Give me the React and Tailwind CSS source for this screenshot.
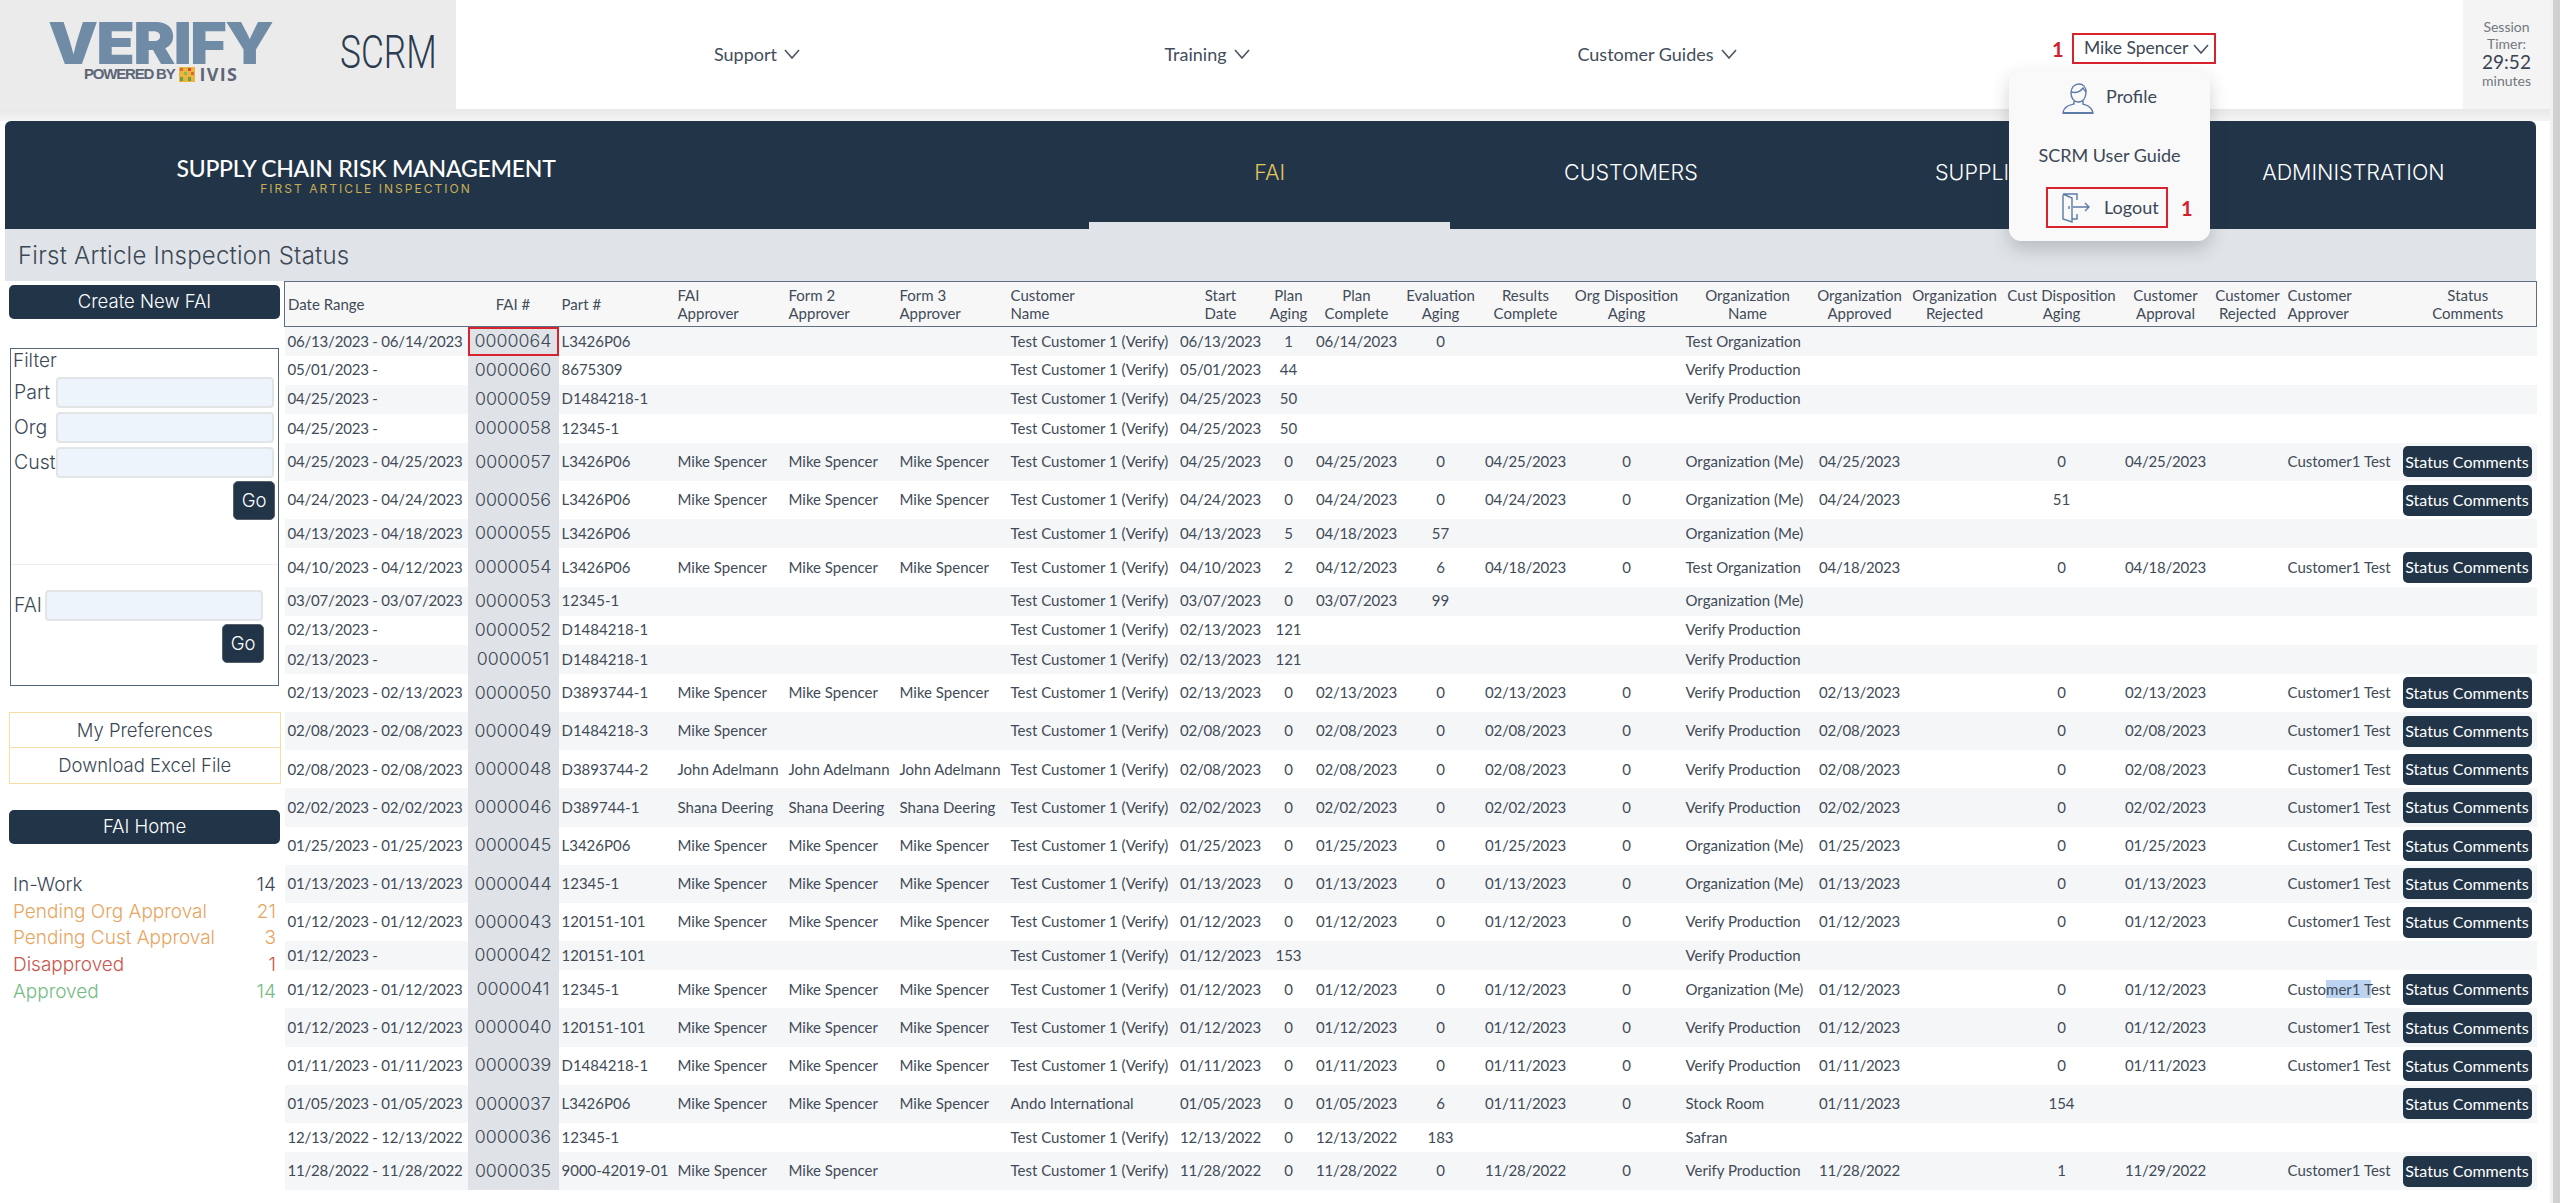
import React from 'react';

const MS = 'Mike Spencer';
const JA = 'John Adelmann';
const SD = 'Shana Deering';
const TC = 'Test Customer 1 (Verify)';
const VP = 'Verify Production';
const OM = 'Organization (Me)';
const TO = 'Test Organization';
const C1 = 'Customer1 Test';

// Rows with a full approval history all repeat the same date, so build them from one value
const full = (date, fai, part, org, approvers = [MS, MS, MS], marked = false) => ({
  range: `${date} - ${date}`, fai, part, approvers, customer: TC, start: date, aging: '0', complete: date,
  evalAging: '0', results: date, orgAging: '0', org, orgApproved: date, custAging: '0', custApproval: date,
  approver: C1, button: true, marked,
});

const open = (date, fai, part, aging, org, extra = {}) => ({
  range: `${date} -`, fai, part, approvers: ['', '', ''], customer: TC, start: date, aging, org, ...extra,
});

const ROWS = [
  { ...open('06/13/2023', '0000064', 'L3426P06', '1', TO), range: '06/13/2023 - 06/14/2023', complete: '06/14/2023', evalAging: '0', boxed: true },
  open('05/01/2023', '0000060', '8675309', '44', VP),
  open('04/25/2023', '0000059', 'D1484218-1', '50', VP),
  open('04/25/2023', '0000058', '12345-1', '50', ''),
  full('04/25/2023', '0000057', 'L3426P06', OM),
  { ...full('04/24/2023', '0000056', 'L3426P06', OM), custAging: '51', custApproval: '', approver: '' },
  { ...open('04/13/2023', '0000055', 'L3426P06', '5', OM), range: '04/13/2023 - 04/18/2023', complete: '04/18/2023', evalAging: '57' },
  { ...full('04/10/2023', '0000054', 'L3426P06', TO), range: '04/10/2023 - 04/12/2023', aging: '2', complete: '04/12/2023', evalAging: '6', results: '04/18/2023', orgApproved: '04/18/2023', custApproval: '04/18/2023' },
  { ...open('03/07/2023', '0000053', '12345-1', '0', OM), range: '03/07/2023 - 03/07/2023', complete: '03/07/2023', evalAging: '99' },
  open('02/13/2023', '0000052', 'D1484218-1', '121', VP),
  open('02/13/2023', '0000051', 'D1484218-1', '121', VP),
  full('02/13/2023', '0000050', 'D3893744-1', VP),
  full('02/08/2023', '0000049', 'D1484218-3', VP, [MS, '', '']),
  full('02/08/2023', '0000048', 'D3893744-2', VP, [JA, JA, JA]),
  full('02/02/2023', '0000046', 'D389744-1', VP, [SD, SD, SD]),
  full('01/25/2023', '0000045', 'L3426P06', OM),
  full('01/13/2023', '0000044', '12345-1', OM),
  full('01/12/2023', '0000043', '120151-101', VP),
  open('01/12/2023', '0000042', '120151-101', '153', VP),
  full('01/12/2023', '0000041', '12345-1', OM, [MS, MS, MS], true),
  full('01/12/2023', '0000040', '120151-101', VP),
  full('01/11/2023', '0000039', 'D1484218-1', VP),
  { ...full('01/05/2023', '0000037', 'L3426P06', 'Stock Room'), customer: 'Ando International', evalAging: '6', results: '01/11/2023', orgApproved: '01/11/2023', custAging: '154', custApproval: '', approver: '' },
  { ...open('12/13/2022', '0000036', '12345-1', '0', 'Safran'), range: '12/13/2022 - 12/13/2022', complete: '12/13/2022', evalAging: '183' },
  { ...full('11/28/2022', '0000035', '9000-42019-01', VP, [MS, MS, '']), custAging: '1', custApproval: '11/29/2022' },
];

const COLS = ['w-[183px]', 'w-[91px]', 'w-[116px]', 'w-[111px]', 'w-[111px]', 'w-[111px]', 'w-[167px]', 'w-[92px]', 'w-[44px]', 'w-[92px]', 'w-[76px]', 'w-[94px]', 'w-[108px]', 'w-[134px]', 'w-[90px]', 'w-[100px]', 'w-[114px]', 'w-[94px]', 'w-[70px]', 'w-[117px]', 'w-[137px]'];

// label lines, alignment
const HEADERS = [
  [['Date Range'], 'l'], [['FAI #'], 'c'], [['Part #'], 'l'], [['FAI', 'Approver'], 'l'], [['Form 2', 'Approver'], 'l'], [['Form 3', 'Approver'], 'l'],
  [['Customer', 'Name'], 'l'], [['Start', 'Date'], 'c'], [['Plan', 'Aging'], 'c'], [['Plan', 'Complete'], 'c'], [['Evaluation', 'Aging'], 'c'], [['Results', 'Complete'], 'c'],
  [['Org Disposition', 'Aging'], 'c'], [['Organization', 'Name'], 'c'], [['Organization', 'Approved'], 'c'], [['Organization', 'Rejected'], 'c'], [['Cust Disposition', 'Aging'], 'c'],
  [['Customer', 'Approval'], 'c'], [['Customer', 'Rejected'], 'c'], [['Customer', 'Approver'], 'l'], [['Status', 'Comments'], 'c'],
];

const STATUS = [
  ['In-Work', '14', 'text-[#3c4855]'],
  ['Pending Org Approval', '21', 'text-[#e6a561]'],
  ['Pending Cust Approval', '3', 'text-[#e6a561]'],
  ['Disapproved', '1', 'text-[#c9564e]'],
  ['Approved', '14', 'text-[#74bb84]'],
];

function Chevron() {
  return (
    <svg width="16" height="10" viewBox="0 0 16 10" fill="none" stroke="#4a5563" strokeWidth="1.6">
      <path d="M1 1l7 8 7-8" />
    </svg>
  );
}

function NavLink({ label }) {
  return (
    <div className="w-[450px] flex justify-center items-center gap-[7px] text-[18px] text-[#434d5a]">
      {label} <Chevron />
    </div>
  );
}

function Logo() {
  return (
    <div className="w-[340px] shrink-0 pl-[48px] pt-[22px] flex flex-col">
      <span className="h-[42px] w-[204px] leading-[42px] text-[58px] font-black font-['Inter'] text-[#6f8ba6] tracking-[-0.03em] whitespace-nowrap scale-x-[1.09] origin-left">VERIFY</span>
      <div className="flex items-center ml-[36px] mt-[3px] h-[14px]">
        <span className="text-[15px] leading-[14px] font-bold font-['Liberation_Sans'] tracking-[-0.08em] text-[#5d6678] whitespace-nowrap">POWERED BY</span>
        <svg className="ml-[4px]" width="16" height="15" viewBox="0 0 16 15">
          <rect width="16" height="15" fill="#e9b43f" />
          <rect x="1" y="1" width="3" height="3" fill="#e0662f" />
          <rect x="9" y="1" width="3" height="3" fill="#d9482f" />
          <rect x="5" y="5" width="3" height="3" fill="#8fb84a" />
          <rect x="12" y="5" width="3" height="3" fill="#e0662f" />
          <rect x="1" y="10" width="3" height="4" fill="#6f9e3f" />
          <rect x="9" y="10" width="3" height="4" fill="#6f9e3f" />
        </svg>
        <span className="ml-[5px] text-[18px] leading-[14px] font-bold font-['Open_Sans'] tracking-[0.07em] text-[#5d6678]">IVIS</span>
      </div>
    </div>
  );
}

function Header() {
  return (
    <header className="h-[109px] flex bg-white">
      <div className="w-[456px] bg-[#ebebec] flex">
        <Logo />
        <span className="mt-[28px] h-[48px] text-[47px] leading-[48px] font-['Roboto'] font-light text-[#2b3c50] scale-x-[0.75] origin-left">SCRM</span>
      </div>
      <div className="flex-1 flex pl-[76px] items-start pt-[33px]">
        <div className="flex h-[42px]">
          <NavLink label="Support" />
          <NavLink label="Training" />
          <NavLink label="Customer Guides" />
        </div>
        <span className="ml-[170px] w-[20px] mt-[1px] text-[20px] leading-[31px] font-bold text-[#d4202c]">1</span>
        <div className="w-[144px] h-[31px] border-2 border-[#d8232e] flex items-center justify-between pl-[10px] pr-[5px] text-[17.5px] text-[#3c4855] whitespace-nowrap">
          Mike Spencer <Chevron />
        </div>
      </div>
      <div className="w-[87px] bg-[#f4f4f5] flex flex-col items-center pt-[18px] text-[14px] leading-[17px] text-[#727880]">
        <span>Session</span>
        <span>Timer:</span>
        <span className="text-[19px] leading-[20px] text-[#3a4450]">29:52</span>
        <span>minutes</span>
      </div>
    </header>
  );
}

function Tab({ label, active }) {
  return (
    <div className={`relative w-[361.25px] flex items-center justify-center pb-[5px] text-[21.5px] font-light font-['Inter'] ${active ? 'text-[#e3c45f]' : 'text-white'}`}>
      {label}
      {active && <span className="absolute left-0 right-0 bottom-0 h-[7px] bg-[#e0e4e8]" />}
    </div>
  );
}

function NavBar() {
  return (
    <nav className="h-[108px] bg-[#223548] rounded-t-[6px] flex">
      <div className="w-[1084.5px] flex">
        <div className="w-[723px] flex flex-col items-center pt-[35px]">
          <span className="text-[23px] leading-[24px] font-['Lato'] font-medium text-white whitespace-nowrap tracking-[-0.01em]">SUPPLY CHAIN RISK MANAGEMENT</span>
          <span className="mt-[1px] text-[12px] leading-[16px] font-['Inter'] tracking-[0.17em] text-[#c9ae55] whitespace-nowrap">FIRST ARTICLE INSPECTION</span>
        </div>
      </div>
      <Tab label="FAI" active />
      <Tab label="CUSTOMERS" />
      <Tab label="SUPPLIERS" />
      <Tab label="ADMINISTRATION" />
    </nav>
  );
}

function DarkBar({ label }) {
  return (
    <div className="h-[34px] rounded-[5px] bg-[#223548] text-white flex items-center justify-center text-[18.5px] font-['Inter'] font-light">
      {label}
    </div>
  );
}

function GoButton() {
  return (
    <button className="w-[42px] h-[39px] rounded-[5px] border border-[#55606b] bg-[#223548] text-white text-[18.5px] font-['Inter'] font-light">Go</button>
  );
}

function FilterInput({ label, width }) {
  return (
    <div className="flex items-center justify-between text-[19.5px] font-['Inter'] font-light text-[#3c4855]">
      <span className="pl-[3px]">{label}</span>
      <div className={`${width} h-[31px] rounded-[4px] border-2 border-[#e3e4e6] bg-[#eef4fb]`} />
    </div>
  );
}

function Sidebar() {
  return (
    <aside className="w-[279.5px] shrink-0 pl-[4.5px] pr-[4px] pt-[4px] font-['Inter'] text-[#3c4855]">
      <DarkBar label="Create New FAI" />
      <div className="mt-[29px] ml-[1px] w-[269px] h-[338px] border border-[#55677a] pt-[1px] flex flex-col">
        <span className="h-[22px] pl-[2px] text-[19px] font-light leading-[22px]">Filter</span>
        <div className="mt-[5px] pr-[4px] flex flex-col gap-[4px]">
          <FilterInput label="Part" width="w-[218px]" />
          <FilterInput label="Org" width="w-[218px]" />
          <FilterInput label="Cust" width="w-[218px]" />
        </div>
        <div className="mt-[3px] pr-[3px] flex justify-end"><GoButton /></div>
        <div className="mt-[44px] h-px bg-[#eceef0]" />
        <div className="mt-[25px] pr-[15px]">
          <FilterInput label="FAI" width="w-[218px]" />
        </div>
        <div className="mt-[3px] pr-[14px] flex justify-end"><GoButton /></div>
      </div>
      <div className="mt-[26px] -ml-[0.5px] w-[272.5px] border border-[#f4dea3] text-[18.5px] font-light text-center">
        <div className="h-[35px] leading-[34px] border-b border-[#f4dea3]">My Preferences</div>
        <div className="h-[35px] leading-[35px]">Download Excel File</div>
      </div>
      <div className="mt-[26px]"><DarkBar label="FAI Home" /></div>
      <div className="mt-[28px] pl-[4px] pr-[4px] text-[19px] font-light leading-[26.7px]">
        {STATUS.map(([label, count, color]) => (
          <div key={label} className={`flex justify-between ${color}`}>
            <span>{label}</span>
            <span>{count}</span>
          </div>
        ))}
      </div>
    </aside>
  );
}

function Cell({ children, left, pad = 'pl-[3px]', className = '' }) {
  return <td className={`p-0 pb-[1px] whitespace-nowrap overflow-visible ${left ? `text-left ${pad}` : 'text-center'} ${className}`}>{children}</td>;
}

function FaiTable() {
  const tight = 'tracking-[-0.2px]';
  return (
    <table className="table-fixed w-[2252px] h-fit font-['Lato'] text-[15px] text-[#414b57]">
      <colgroup>
        {COLS.map((width, i) => <col key={i} className={width} />)}
      </colgroup>
      <thead>
        <tr className="h-[45px] border border-[#5d6f80] bg-[#f7f7f8]">
          {HEADERS.map(([lines, align], i) => (
            <th key={lines.join()} className={`p-0 font-normal leading-[18px] whitespace-nowrap ${align === 'l' ? (i === 19 ? 'text-left pl-[5px]' : 'text-left pl-[3px]') : 'text-center'}`}>
              {lines.map((line) => <div key={line}>{line}</div>)}
            </th>
          ))}
        </tr>
      </thead>
      <tbody>
        {ROWS.map((r, i) => (
          <tr key={r.fai} className={`${r.button ? 'h-[38.2px]' : 'h-[29.1px]'} ${i % 2 === 0 ? 'bg-[#f5f6f7]' : 'bg-white'}`}>
            <Cell left className={tight}>{r.range}</Cell>
            <td className={`p-0 text-center font-['Inter'] font-light text-[17.8px] text-[#3c4855] bg-[#dfe2e6] ${r.boxed ? 'outline-2 -outline-offset-2 outline-[#d8232e]' : ''}`}>{r.fai}</td>
            <Cell left>{r.part}</Cell>
            {r.approvers.map((a, j) => <Cell key={j} left>{a}</Cell>)}
            <Cell left>{r.customer}</Cell>
            <Cell className={tight}>{r.start}</Cell>
            <Cell>{r.aging}</Cell>
            <Cell className={tight}>{r.complete}</Cell>
            <Cell>{r.evalAging}</Cell>
            <Cell className={tight}>{r.results}</Cell>
            <Cell>{r.orgAging}</Cell>
            <Cell left pad="pl-[5px]">{r.org}</Cell>
            <Cell className={tight}>{r.orgApproved}</Cell>
            <Cell />
            <Cell>{r.custAging}</Cell>
            <Cell className={tight}>{r.custApproval}</Cell>
            <Cell />
            <Cell left pad="pl-[5px]">
              {r.marked ? <>Custo<span className="bg-[#bcd4f2]">mer1 T</span>est</> : r.approver}
            </Cell>
            <td className="p-0">
              {r.button && (
                <button className="ml-[3px] flex items-center justify-center w-[129px] h-[31px] rounded-[5px] bg-[#223548] text-white text-[16px]">Status Comments</button>
              )}
            </td>
          </tr>
        ))}
      </tbody>
    </table>
  );
}

function UserMenu() {
  return (
    <div className="absolute left-[2009px] top-[70px] w-[201px] h-[171px] rounded-[12px] bg-[#f9f9fa] shadow-[0_8px_18px_rgba(40,50,60,0.22)] flex flex-col font-['Lato'] text-[18px] text-[#3c4855]">
      <div className="mt-[12px] ml-[53px] flex items-center gap-[12px]">
        <svg width="32" height="32" viewBox="0 0 32 32" fill="none" stroke="#5d7ba6" strokeWidth="1.4">
          <path d="M9 11c0-5 3-9 8-9 4 0 7 3 7 8 0 6-3 10-8 10-4 0-7-4-7-9z" />
          <path d="M9 10c4 1 9 0 12-4 1 2 2 3 3 4" />
          <path d="M12 19v3c-4 1-10 2-11 9h30c-1-7-7-8-10-9v-3" />
          <path d="M1 31h30" strokeWidth="2" />
        </svg>
        <span className="-mt-[4px]">Profile</span>
      </div>
      <span className="mt-[28px] h-[24px] text-center">SCRM User Guide</span>
      <div className="mt-[21px] ml-[37px] flex items-center gap-[13px]">
        <div className="w-[122px] h-[41px] border-2 border-[#d8232e] flex items-center pl-[14px] gap-[14px]">
          <svg width="28" height="31" viewBox="0 0 28 31" fill="none" stroke="#5d7ba6" strokeWidth="1.4">
            <path d="M1 3v24l9 3V6L1 2h14v6M15 22v5h-5" />
            <path d="M7 14v3" />
            <path d="M11 15h16M23 11l4 4-4 4" />
          </svg>
          <span>Logout</span>
        </div>
        <span className="text-[20px] font-bold text-[#d4202c]">1</span>
      </div>
    </div>
  );
}

export default function App() {
  return (
    <div className="relative min-h-screen flex bg-white font-['Lato'] overflow-hidden">
      <div className="w-[2550px] shrink-0">
        <Header />
        <div className="h-[12px] bg-linear-to-b from-[#e8e8e9] to-[#f4f4f4]" />
        <div className="ml-[4.5px] w-[2531.5px]">
          <NavBar />
          <div className="h-[52px] bg-[#e0e4e8] flex items-center pl-[13.5px] pt-[1px] text-[24px] tracking-[0.01em] font-['Inter'] font-light text-[#3c4855]">
            First Article Inspection Status
          </div>
          <div className="flex">
            <Sidebar />
            <FaiTable />
          </div>
        </div>
      </div>
      <div className="flex-1 border-l-[3px] border-[#f1f1f2] bg-[#cfd0d2]" />
      <UserMenu />
    </div>
  );
}
